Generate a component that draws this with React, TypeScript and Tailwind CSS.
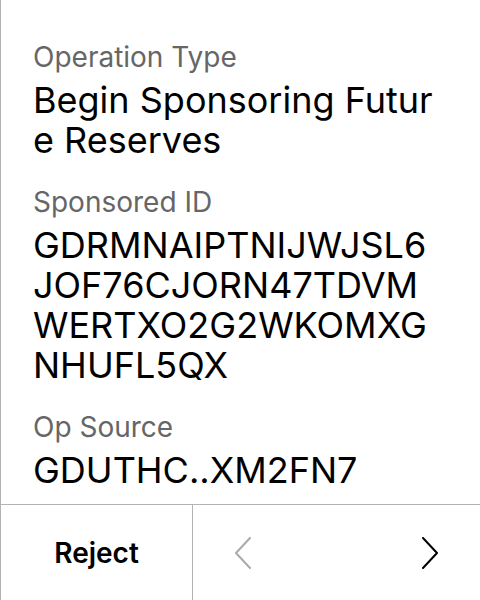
import React from "react";

interface Field {
  label: string;
  value: string;
}

const fields: Field[] = [
  { label: "Operation Type", value: "Begin Sponsoring Future Reserves" },
  { label: "Sponsored ID", value: "GDRMNAIPTNIJWJSL6JOF76CJORN47TDVMWERTXO2G2WKOMXGNHUFL5QX" },
  { label: "Op Source", value: "GDUTHC..XM2FN7" },
];

const Chevron = ({ dir, color }: { dir: "left" | "right"; color: string }) => (
  <svg width="18" height="32" viewBox="0 0 18 32" fill="none">
    <path
      d={dir === "left" ? "M16 1 L2 16 L16 31" : "M2 1 L16 16 L2 31"}
      stroke={color}
      strokeWidth="2"
      strokeLinecap="round"
      strokeLinejoin="round"
    />
  </svg>
);

export default function App() {
  return (
    <div
      className="w-[480px] h-[600px] bg-white border-l border-[#b3b3b3] flex flex-col text-black"
      style={{ fontFamily: "Inter, 'Noto Sans', sans-serif" }}
    >
      <div className="flex-1 pl-[32px] pr-[42px] pt-[41px] flex flex-col gap-[26px]">
        {fields.map((f) => (
          <div key={f.label}>
            <div className="text-[28px] leading-[32px] text-[#666666]">{f.label}</div>
            <div className="mt-[7px] text-[36px] leading-[40px] break-all">{f.value}</div>
          </div>
        ))}
      </div>
      <div className="h-[96px] border-t border-[#b3b3b3] flex">
        <div className="w-[192px] border-r border-[#b3b3b3] flex items-center justify-center">
          <span className="text-[28px] font-semibold">Reject</span>
        </div>
        <div className="flex-1 flex items-center justify-between px-[41px]">
          <Chevron dir="left" color="#aaaaaa" />
          <Chevron dir="right" color="#000000" />
        </div>
      </div>
    </div>
  );
}
